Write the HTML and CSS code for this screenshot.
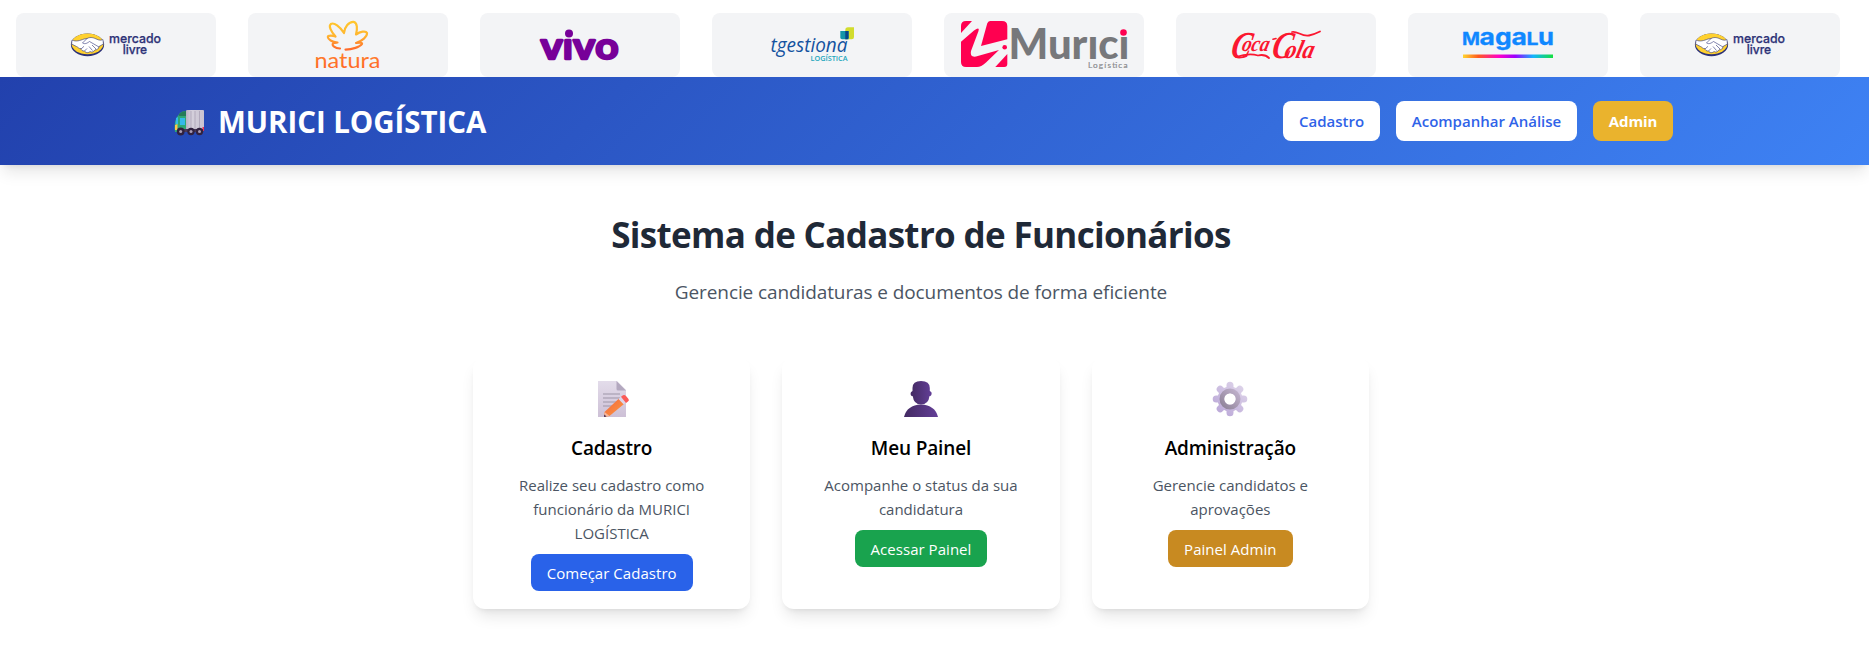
FILE: index.html
```html
<!DOCTYPE html>
<html lang="pt-BR">
<head>
<meta charset="utf-8">
<title>MURICI LOGÍSTICA</title>
<link rel="stylesheet" href="styles.css">
</head>
<body>
<svg class="defs" width="0" height="0">
  <defs>
    <linearGradient id="naturaGrad" x1="0" y1="0" x2="0" y2="1"><stop offset="0" stop-color="#ffc62e"/><stop offset=".5" stop-color="#ffb52f"/><stop offset="1" stop-color="#ff6a2c"/></linearGradient>
    <linearGradient id="naturaText" x1="0" y1="0" x2="0" y2="1"><stop offset="0" stop-color="#ff8f35"/><stop offset="1" stop-color="#ff5f20"/></linearGradient>
    <linearGradient id="rainbow"><stop offset="0" stop-color="#ffd52e"/><stop offset=".17" stop-color="#ff5a1f"/><stop offset=".4" stop-color="#ff00c8"/><stop offset=".58" stop-color="#9a00ff"/><stop offset=".78" stop-color="#12b5ff"/><stop offset="1" stop-color="#14e03c"/></linearGradient>
    <linearGradient id="paper" x1="0" y1="0" x2="0" y2="1"><stop offset="0" stop-color="#e3dcea"/><stop offset="1" stop-color="#cdc0d6"/></linearGradient>
    <linearGradient id="pencil" x1="0" y1="0" x2="1" y2="1"><stop offset="0" stop-color="#f0663f"/><stop offset="1" stop-color="#ff9a3f"/></linearGradient>
    <linearGradient id="person"><stop offset="0" stop-color="#432a62"/><stop offset="1" stop-color="#633f97"/></linearGradient>
    <linearGradient id="cog" x1="1" y1="0" x2="0" y2="1"><stop offset="0" stop-color="#ddd3e9"/><stop offset="1" stop-color="#bba8d3"/></linearGradient>
    <linearGradient id="cogTeeth" gradientUnits="userSpaceOnUse" x1="30" y1="4" x2="6" y2="32"><stop offset="0" stop-color="#ddd3e9"/><stop offset="1" stop-color="#bba8d8"/></linearGradient>
    <linearGradient id="cogRing" x1="1" y1="0" x2="0" y2="1"><stop offset="0" stop-color="#c0b1cc"/><stop offset="1" stop-color="#8f8399"/></linearGradient>
    <linearGradient id="box"><stop offset="0" stop-color="#b9b1c4"/><stop offset=".3" stop-color="#d5d0dc"/><stop offset="1" stop-color="#c9c3d1"/></linearGradient>
    <symbol id="mercado" viewBox="0 0 200 64">
      <ellipse cx="71.5" cy="31.8" rx="16.6" ry="11.4" fill="#2d3277"/>
      <ellipse cx="71.5" cy="30.8" rx="15.9" ry="10.4" fill="#ffd12f"/>
      <path d="M56 27 C60 29 64 27.5 68 26 L71 25.5 C75 23.5 78 25 81 26.3 C83.500 27.500 85.500 27.200 87 26.600 L87.400 31 L83 33.500 C83 36 80.500 37 79 36.800 C77.500 39.200 75.500 39.500 74 38.500 C72 40.500 69.500 39.500 68.500 38 C66.500 38.300 65 37 65 35.700 C62.500 35.700 62 34 60.500 33.500 L55.600 31 Z" fill="#fff" stroke="#2d3277" stroke-width=".6"/>
      <path d="M71 25.500 L66.500 30 C69 31.500 71.500 30 73.500 28.500 L83 34 M76 32 L80 36 M73 33.500 L76.500 37.500 M65 36 L68 33.300 M68.500 38 L71 35.500" fill="none" stroke="#2d3277" stroke-width=".6"/>
      <g font-family="Inter" font-size="12.8" font-weight="500" fill="#2d3277" stroke="#2d3277" stroke-width=".25">
        <text x="93" y="30.300" textLength="52" lengthAdjust="spacingAndGlyphs">mercado</text>
        <text x="106.700" y="41" textLength="24.500" lengthAdjust="spacingAndGlyphs">livre</text>
      </g>
    </symbol>
  </defs>
</svg>

<div class="brands">
  <div class="brand"><svg class="logo"><use href="#mercado"/></svg></div>
  <div class="brand"><svg class="logo" viewBox="0 0 200 64">
    <path d="M92 35.500 C87 35 83.500 32.500 85 30.500 C86 29.500 88 29.600 89.500 29.500 C84 29 80 26.500 79.800 24 C80 22 85 22.500 87.500 23.500 C83 18.500 80.300 13 82.800 11 C86 9 92 13.500 96 20 C96.500 14 101 8.500 105.500 8.800 C109.500 9.500 109.500 16 108 21.500 C112 18.500 118 17.500 119 20 C119.500 23.500 114 28 108 30 C112.500 29.500 114.500 29.500 114 31 C112 34 104 36.500 97.500 36.600" fill="none" stroke="url(#naturaGrad)" stroke-width="2.200" stroke-linecap="round" stroke-linejoin="round"/>
    <text x="66.500" y="54.500" font-family="Lato" font-size="22" font-weight="400" fill="url(#naturaText)" textLength="66" lengthAdjust="spacingAndGlyphs">natura</text>
  </svg></div>
  <div class="brand"><svg class="logo" viewBox="0 0 200 64">
    <text x="61" y="45.700" font-family="Open Sans" font-size="33.500" font-weight="600" fill="#770099" stroke="#770099" stroke-width="2.400" stroke-linejoin="round" textLength="78" lengthAdjust="spacingAndGlyphs">vıvo</text>
    <circle cx="89" cy="20.500" r="4" fill="#770099"/>
  </svg></div>
  <div class="brand"><svg class="logo" viewBox="0 0 200 64">
    <text x="58.500" y="39.300" font-family="Open Sans" font-size="20" font-style="italic" font-weight="500" fill="#1352a0" textLength="77" lengthAdjust="spacingAndGlyphs">tgestiona</text>
    <text x="98.500" y="48.300" font-family="Open Sans" font-size="7.200" font-weight="600" fill="#1ba6bd" textLength="37" lengthAdjust="spacingAndGlyphs">LOGÍSTICA</text>
    <path d="M136 14.300 H142 V24 Q142 26.300 139.700 26.300 H133.300 V17 Q133.300 14.300 136 14.300Z" fill="#d2dc2e"/>
    <path d="M128.300 18 H136.600 V26.300 H130 Q128.300 26.300 128.300 24.500Z" fill="#1295a8"/>
    <path d="M133.300 18 H136.600 V25 L135.500 26.300 H133.300Z" fill="#06458a"/>
  </svg></div>
  <div class="brand"><svg class="logo" viewBox="0 0 200 64">
    <g fill="#ff0050">
      <path d="M22 8 H28 L17 20 V13 Q17 8 22 8Z"/>
      <path d="M17 28.700 L30 17.500 Q36 13.500 34.500 18 L27 38 Q25.500 44.500 32 43.500 L55 37 L42 49.500 Q37 54 33 54 H22 Q17 54 17 49Z"/>
      <path d="M46 8 H58 Q63.300 8 63.300 13 V26.300 L37 33 L43.200 10.500 Q44 8 46 8Z"/>
      <circle cx="60.700" cy="34.300" r="2.300"/>
      <path d="M63.300 41 V51 Q63.300 54 60.300 54 H51.300Z"/>
      <circle cx="179.500" cy="19.500" r="3.300"/>
    </g>
    <text x="64.500" y="46" font-family="Lato" font-size="42" font-weight="900" fill="#77787b" textLength="121" lengthAdjust="spacingAndGlyphs">Murıcı</text>
    <text x="144" y="54.500" font-family="Lato" font-size="8.200" fill="#8b8c8f" stroke="#8b8c8f" stroke-width=".2" textLength="39.500">Logística</text>
  </svg></div>
  <div class="brand"><svg class="logo" viewBox="0 0 200 64">
    <g font-family="Liberation Serif" font-style="italic" font-weight="700" fill="#fb1730">
      <text transform="translate(53.500 44.500) skewX(-12)" font-size="38" textLength="20" lengthAdjust="spacingAndGlyphs">C</text>
      <text transform="translate(65 38) skewX(-14)" font-size="22" textLength="27" lengthAdjust="spacingAndGlyphs">oca</text>
      <text transform="translate(94.500 44.500) skewX(-12)" font-size="38" textLength="20" lengthAdjust="spacingAndGlyphs">C</text>
      <text transform="translate(107.500 44.500) skewX(-14)" font-size="26" textLength="29" lengthAdjust="spacingAndGlyphs">ola</text>
    </g>
    <g fill="none" stroke="#fb1730" stroke-linecap="round">
      <path d="M60 44 C69 41 75 40.500 82 42.500 C88 41 91 43 93 45" stroke-width="1.800"/>
      <path d="M97 26.300 L100 25.500" stroke-width="1.600"/>
      <path d="M116 19 C121 17.500 126 24 133 22.500 C138 21.500 141 20 144 18.500" stroke-width="1.800"/>
    </g>
  </svg></div>
  <div class="brand"><svg class="logo" viewBox="0 0 200 64">
    <g font-family="Inter" font-weight="700" fill="#1088ff" stroke="#1088ff" stroke-width=".3" stroke-linejoin="round">
      <text x="54" y="32.300" font-size="18" textLength="18" lengthAdjust="spacingAndGlyphs">M</text>
      <text x="71.500" y="32.300" font-size="23.500" textLength="47.500" lengthAdjust="spacingAndGlyphs">aga</text>
      <text x="118.500" y="32.300" font-size="18" textLength="12" lengthAdjust="spacingAndGlyphs">L</text>
      <text x="130" y="32.300" font-size="23.500" textLength="16" lengthAdjust="spacingAndGlyphs">u</text>
    </g>
    <rect x="55" y="41.500" width="90" height="3.500" fill="url(#rainbow)"/>
  </svg></div>
  <div class="brand"><svg class="logo"><use href="#mercado"/></svg></div>
</div>

<header class="header">
  <div class="header-inner">
    <div class="title">
      <svg class="truck" viewBox="0 0 30 26">
        <path d="M3 7 L6 3 Q8 1 12 1 V22 H1 Q0 18 1 12Z" fill="#2fa876"/>
        <path d="M5 4 Q8 1 12 1 V6 H5Z" fill="#267a5a"/>
        <path d="M2 8 L4 7 V14 L1.500 14.500Z M6 8 H11 V15 H6Z" fill="#35b9ea"/>
        <path d="M1 15 L3.500 14 V20 H1Z" fill="#ffc84a"/>
        <rect x="12" y="0" width="18" height="20" rx="1" fill="url(#box)"/>
        <path d="M17 1 V19 M21 1 V19 M25.500 1 V19" stroke="#aaa1b5" stroke-width=".8"/>
        <path d="M9 19 H29 V22 H9Z" fill="#4a3a5a"/><path d="M28.500 17 H30 V21 H28.500Z" fill="#f0325a"/>
        <g fill="#31223f"><circle cx="6.700" cy="21.500" r="3.900"/><circle cx="17" cy="21.500" r="3.700"/><circle cx="25.500" cy="21.500" r="3.700"/></g>
        <g fill="#a79bb5"><circle cx="6.700" cy="21.500" r="1.500"/><circle cx="17" cy="21.500" r="1.500"/><circle cx="25.500" cy="21.500" r="1.500"/></g>
      </svg>
      <h1 class="name">MURICI LOGÍSTICA</h1>
    </div>
    <nav class="nav">
      <a class="nav-link nav-register">Cadastro</a>
      <a class="nav-link nav-track">Acompanhar Análise</a>
      <a class="nav-link nav-admin">Admin</a>
    </nav>
  </div>
</header>

<main class="main">
  <h2 class="heading">Sistema de Cadastro de Funcionários</h2>
  <p class="lead">Gerencie candidaturas e documentos de forma eficiente</p>
  <div class="cards">
    <section class="card">
      <svg class="emoji" viewBox="0 0 36 36">
        <path d="M4 0 H23 L32 9 V36 H4Z" fill="url(#paper)"/><path d="M22.500 0 L32 9.500 H24 Q22.500 9.500 22.500 8Z" fill="#b3a8bf"/>
        <path d="M9 13 H26 M9 17 H26 M9 21 H24 M9 25 H19" stroke="#9d96a7" stroke-width="1.100"/>
        <path d="M10.500 31 L25 17.500 L30 23 L15.500 35 L10 36Z" fill="url(#pencil)"/>
        <path d="M10.500 31 L15.500 35 L10 36Z" fill="#f5b89e"/><path d="M10.300 33.500 L12.500 35.600 L10 36Z" fill="#3a2750"/>
        <path d="M24.500 18 L27 15.800 L32 21 L29.500 23.300Z" fill="#ded4e8"/>
        <path d="M27 15.800 L29 14.300 Q30.500 13.500 32 15 L34.500 18 Q35.500 19.500 34 20.500 L32 22Z" fill="#fb5b58"/>
      </svg>
      <h3 class="card-title">Cadastro</h3>
      <p class="card-text">Realize seu cadastro como<br>funcionário da MURICI<br>LOGÍSTICA</p>
      <a class="button button-blue">Começar Cadastro</a>
    </section>
    <section class="card">
      <svg class="emoji" viewBox="0 0 36 36" fill="url(#person)">
        <path d="M9.500 10 V7 Q9.500 0 18 0 Q26.800 0 26.800 7 V10 Q29.500 11 28.300 14 Q27.500 15.500 26.500 15 Q25.500 23.500 18 23.500 Q10.800 23.500 9.700 15 Q8.500 15.500 7.800 14 Q7 11 9.500 10Z"/>
        <path d="M1 36 Q4 24 18 23.500 Q32 24 35 36Z"/>
      </svg>
      <h3 class="card-title">Meu Painel</h3>
      <p class="card-text">Acompanhe o status da sua<br>candidatura</p>
      <a class="button button-green">Acessar Painel</a>
    </section>
    <section class="card">
      <svg class="emoji" viewBox="0 0 36 36">
        <circle cx="18" cy="18" r="9" fill="none" stroke="url(#cog)" stroke-width="7"/>
        <path d="M18 8 V4.200 M18 28 V31.800 M8 18 H4.200 M28 18 H31.800 M11 11 L8.200 8.200 M25 11 L27.800 8.200 M11 25 L8.200 27.800 M25 25 L27.800 27.800" stroke="url(#cogTeeth)" stroke-width="7" stroke-linecap="round"/>
        <circle cx="18" cy="18" r="8" fill="none" stroke="url(#cogRing)" stroke-width="5"/>
        <circle cx="18" cy="18" r="5.600" fill="#fff"/>
      </svg>
      <h3 class="card-title">Administração</h3>
      <p class="card-text">Gerencie candidatos e<br>aprovações</p>
      <a class="button button-gold">Painel Admin</a>
    </section>
  </div>
</main>
</body>
</html>
```
FILE: styles.css
```css
* { box-sizing: border-box; margin: 0; padding: 0; }
body { min-height: 100vh; background: #fff; font-family: "Open Sans", "Noto Sans", sans-serif; overflow-x: hidden; }
.defs { display: block; height: 0; }
.brands { display: flex; gap: 32px; padding: 13px 16px 0; }
.brand { flex: none; width: 200px; height: 64px; border-radius: 8px; background: #f3f4f6; }
.logo { display: block; width: 200px; height: 64px; }
.header { height: 88px; background: linear-gradient(135deg, #2241ad 0%, #3e82f4 100%); box-shadow: 0 10px 15px -3px rgba(0, 0, 0, .1), 0 4px 6px -4px rgba(0, 0, 0, .1); }
.header-inner { display: flex; justify-content: space-between; align-items: center; height: 88px; padding: 0 196px 0 174px; }
.title { display: flex; align-items: center; gap: 14px; color: #fff; }
.truck { width: 30px; height: 26px; margin-top: 4px; }
.name { padding-top: 2px; font-size: 29.500px; line-height: 36px; font-weight: 700; letter-spacing: -.05px; white-space: nowrap; }
.nav { display: flex; gap: 16px; }
.nav-link { height: 40px; line-height: 40px; border-radius: 8px; background: #fff; color: #2f63e8; font-size: 15px; font-weight: 600; text-align: center; white-space: nowrap; }
.nav-register { width: 97px; }
.nav-track { width: 181px; }
.nav-admin { width: 80px; background: #eab32d; color: #fff; font-weight: 700; letter-spacing: -.1px; }
.main { width: 1842px; padding: 48px 0 52px; text-align: center; }
.heading { font-size: 35px; line-height: 44px; font-weight: 700; color: #1f2937; letter-spacing: -.67px; }
.lead { margin-top: 21px; font-size: 19px; line-height: 28px; color: #4b5563; letter-spacing: -.1px; }
.cards { display: grid; grid-template-columns: repeat(3, 1fr); gap: 32px; width: 896px; margin: 51px auto 0; }
.card { height: 252px; padding: 24px; border-radius: 12px; background: #fff; box-shadow: 0 10px 15px -3px rgba(0, 0, 0, .1), 0 4px 6px -4px rgba(0, 0, 0, .1); }
.emoji { display: block; width: 36px; height: 36px; margin: 0 auto 17px; }
.card-title { font-size: 19px; line-height: 28px; font-weight: 600; color: #000; letter-spacing: -.15px; }
.card-text { margin-top: 11px; font-size: 15px; line-height: 24px; color: #4b5563; white-space: nowrap; }
.button { display: inline-block; height: 37px; margin-top: 9px; padding: 0 16px; border-radius: 8px; color: #fff; font-size: 15px; line-height: 38px; letter-spacing: .04px; white-space: nowrap; }
.button-blue { background: #2962e9; }
.button-green { background: #19a34e; }
.button-gold { background: #c88a21; }
```
